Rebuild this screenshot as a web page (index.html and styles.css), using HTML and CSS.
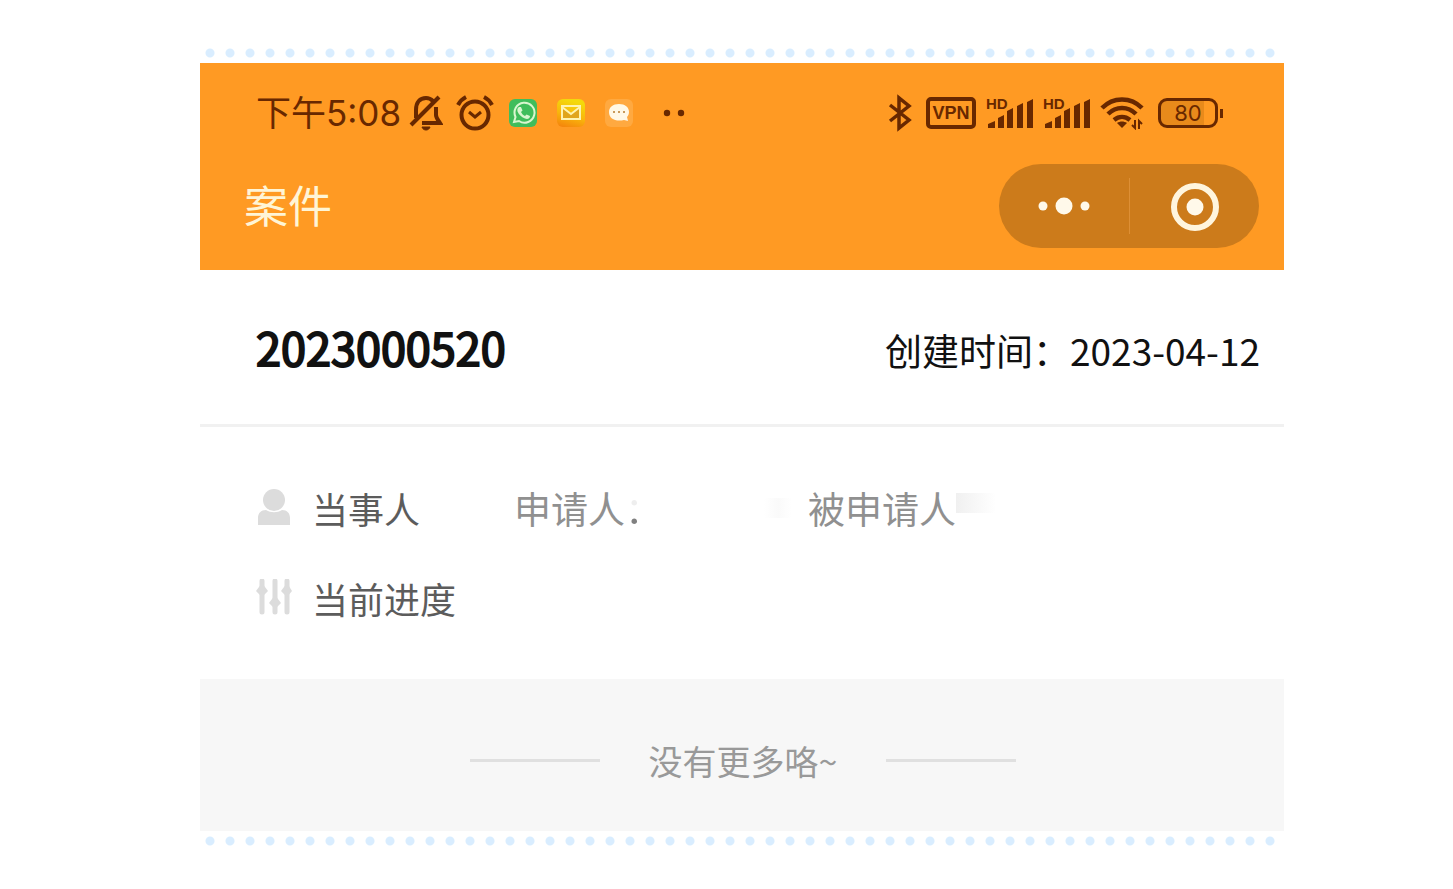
FILE: index.html
```
<!DOCTYPE html>
<html lang="zh-CN">
<head>
  <meta charset="UTF-8">
  <meta name="viewport" content="width=device-width, initial-scale=1.0">
  <title>案件</title>
  <link rel="stylesheet" href="styles.css">
</head>
<body>
  <main class="page">
    <div class="dots"></div>

    <header class="topbar">
      <div class="status">
        <div class="status-left">
          <span class="time">下午5:08</span>
          <svg width="34" height="38" viewBox="0 0 34 38" fill="none" stroke="#682800" stroke-width="4">
            <path d="M7 24V16C7 8 11 4 17 4c3 0 5 1 7 3M27 13v8c0 3 2 5 4 8H13"/>
            <path d="M2 31L30 3"/>
            <path d="M13 33h8c-1 4-7 4-8 0z" fill="#682800" stroke-width="1"/>
          </svg>
          <svg width="38" height="38" viewBox="0 0 38 38" fill="none" stroke="#682800" stroke-width="4">
            <circle cx="19" cy="21" r="13.5"/>
            <path d="M13 18l6 5 6-5" stroke-width="3"/>
            <path d="M2 11c2-4 4-6 8-8M28 3c4 2 6 4 8 8"/>
          </svg>
          <svg class="app" width="28" height="28" viewBox="0 0 28 28">
            <rect width="28" height="28" rx="6" fill="#40bd5b"/>
            <path d="M5 23l1.500-5A10 10 0 1 1 10 22z" fill="none" stroke="#d9f6cf" stroke-width="2"/>
            <path d="M10 8l2 0 1.500 3.500-1.500 1.500c1 2 2 3 4 4l1.500-1.500 3.500 1.500c0 3-3 3.500-5 2.500-4-1.500-6-4-7.500-7-.5-2 0-4 1.500-4.500z" fill="#d9f6cf"/>
          </svg>
          <svg class="app" width="28" height="28" viewBox="0 0 28 28">
            <defs>
              <linearGradient id="mail" x1="0" y1="1" x2="0.300" y2="0">
                <stop offset="0" stop-color="#f47f0c"/>
                <stop offset=".5" stop-color="#f9b50c"/>
                <stop offset="1" stop-color="#f4d90b"/>
              </linearGradient>
            </defs>
            <rect width="28" height="28" rx="6" fill="url(#mail)"/>
            <path d="M5 7h18v13H5zM5 8l9 7 9-7" fill="#e0a51c" stroke="#fff3b0" stroke-width="2"/>
          </svg>
          <svg class="app" width="28" height="28" viewBox="0 0 28 28">
            <rect width="28" height="28" rx="6" fill="#ffa940"/>
            <path d="M14 5c6 0 10 3 10 8 0 2-1 4-2 5l1 4-4-1c-8 2-15-1-15-8 0-5 4-8 10-8z" fill="#fff8e6"/>
            <path d="M8 13h2M13 13h2M18 13h2" stroke="#c99a5a" stroke-width="2"/>
          </svg>
          <svg class="more" width="22" height="8" viewBox="0 0 22 8" fill="#682800">
            <circle cx="4" cy="4" r="3.200"/>
            <circle cx="18" cy="4" r="3.200"/>
          </svg>
        </div>
        <div class="status-right">
          <svg width="24" height="38" viewBox="0 0 24 38" fill="none" stroke="#682800" stroke-width="3.500">
            <path d="M2 11l19 15-10 8V4l10 8L2 27"/>
          </svg>
          <span class="vpn">VPN</span>
          <span class="signal">
            <span class="hd">HD</span>
            <svg width="47" height="32" viewBox="0 0 47 32" fill="#682800">
              <path d="M2 31v-4l7-3v7zM12 31V21l6-3v13zM21 31V14l6-3v20zM31 31V9l6-3v25zM41 31V5l6-3v29z"/>
            </svg>
          </span>
          <span class="signal">
            <span class="hd">HD</span>
            <svg width="47" height="32" viewBox="0 0 47 32" fill="#682800">
              <path d="M2 31v-4l7-3v7zM12 31V21l6-3v13zM21 31V14l6-3v20zM31 31V9l6-3v25zM41 31V5l6-3v29z"/>
            </svg>
          </span>
          <svg width="44" height="34" viewBox="0 0 44 34" fill="none" stroke="#682800" stroke-width="4.500">
            <path d="M2 12C13 .5 31 .5 42 12M8 18c8-8 20-8 28 0M14 24c5-4 11-4 16 0"/>
            <path d="M17 27c3-2 7-2 10 0l-5 5z" fill="#682800" stroke="none"/>
            <path d="M35 24v8l-3-3M39 33v-8l3 3" stroke-width="2"/>
          </svg>
          <span class="battery">80</span>
        </div>
      </div>

      <div class="nav">
        <h1>案件</h1>
        <div class="capsule">
          <button type="button" aria-label="更多">
            <svg width="52" height="20" viewBox="0 0 52 20" fill="#fff9ea">
              <circle cx="5" cy="10" r="4.500"/>
              <circle cx="26" cy="10" r="8.500"/>
              <circle cx="47" cy="10" r="4.500"/>
            </svg>
          </button>
          <button type="button" aria-label="关闭">
            <svg width="50" height="50" viewBox="0 0 50 50">
              <circle cx="26" cy="26" r="21" fill="none" stroke="#fff5dd" stroke-width="6"/>
              <circle cx="26" cy="26" r="8.500" fill="#fff9ea"/>
            </svg>
          </button>
        </div>
      </div>
    </header>

    <section class="case">
      <div class="case-head">
        <h2>2023000520</h2>
        <span class="created">创建时间：2023-04-12</span>
      </div>
      <div class="case-body">
        <div class="row">
          <svg width="36" height="38" viewBox="0 0 36 38" fill="#dcdcdc">
            <ellipse cx="18" cy="11" rx="11" ry="11"/>
            <path d="M2 36V29c0-5 3-8 8-8 5 3 11 3 16 0 5 0 8 3 8 8v7z"/>
          </svg>
          <span class="label">当事人</span>
          <span class="applicant">申请人<span class="colon">：</span></span>
          <span class="smudge"></span>
          <span class="respondent">被申请人</span>
          <span class="smudge dark"></span>
        </div>
        <div class="row">
          <svg width="36" height="38" viewBox="0 0 36 38" fill="#dcdcdc" stroke="#dcdcdc" stroke-linecap="round">
            <path d="M6 2v31M19 2v31M31 2v31" stroke-width="5"/>
            <path d="M6 4l6 8-6 6-6-6zM19 16l6 8-6 6-6-6zM31 4l5 8-5 6-6-6z" stroke="none"/>
          </svg>
          <span class="label">当前进度</span>
        </div>
      </div>
    </section>

    <footer class="no-more">没有更多咯~</footer>

    <div class="dots"></div>
  </main>
</body>
</html>
```

FILE: styles.css
```
* {
  box-sizing: border-box;
}
body {
  margin: 0;
  background: #fff;
  color: #111;
  font-family: "Noto Sans CJK SC", sans-serif;
}
h1, h2 {
  margin: 0;
  font-weight: normal;
}
svg {
  display: block;
  flex-shrink: 0;
}
.page {
  padding: 43px 169px 38px 200px;
}
.dots {
  height: 20px;
  background: radial-gradient(circle, #d9edff 4px, transparent 5px) 0 0 / 20px 20px;
}

/* top bar */
.topbar {
  background: #ff9a23;
  padding-bottom: 22px;
}
.status {
  display: flex;
  justify-content: space-between;
  align-items: center;
  height: 101px;
  padding: 0 66px 2px 56px;
  color: #682800;
}
.status-left, .status-right {
  display: flex;
  align-items: center;
}
.time {
  font-family: Inter, "Noto Sans CJK SC", sans-serif;
  font-size: 35px;
  line-height: 40px;
  margin-right: 8px;
}
.status-left svg {
  margin-right: 13px;
}
.status-left .app {
  margin-right: 20px;
}
.status-left svg + .app {
  margin-left: 2px;
}
.status-left .app + .app {
  margin-left: 0;
}
.status-left .more {
  margin: 0 0 0 10px;
}
.status-right {
  gap: 10px;
}
.vpn {
  width: 50px;
  height: 32px;
  margin-left: 4px;
  border: 4px solid #682800;
  border-radius: 5px;
  font: bold 18px/24px "Liberation Sans", sans-serif;
  text-align: center;
}
.signal {
  position: relative;
}
.hd {
  position: absolute;
  top: 0;
  left: 0;
  font: bold 15px/14px "Liberation Sans", sans-serif;
}
.battery {
  position: relative;
  width: 60px;
  height: 30px;
  margin-left: 4px;
  border: 3px solid #682800;
  border-radius: 9px;
  background: linear-gradient(to right, #e88a1b 80%, transparent 80%);
  font: 22px/24px Inter, sans-serif;
  text-align: center;
}
.battery::after {
  content: "";
  position: absolute;
  top: 8px;
  right: -8px;
  width: 3px;
  height: 9px;
  background: #682800;
}
.nav {
  display: flex;
  justify-content: space-between;
  align-items: center;
  padding: 0 25px 0 44px;
}
.nav h1 {
  padding-bottom: 4px;
  color: #fff5d6;
  font-size: 44px;
  line-height: 60px;
}
.capsule {
  display: flex;
  width: 260px;
  height: 84px;
  border-radius: 42px;
  background: #cc7b1b;
}
.capsule button {
  flex: 1;
  display: flex;
  justify-content: center;
  align-items: center;
  margin: 14px 0;
  padding: 0;
  border: 0;
  background: none;
  cursor: pointer;
}
.capsule button + button {
  border-left: 1px solid #dd8f35;
}

/* case card */
.case {
  background: #fff;
}
.case-head {
  display: flex;
  justify-content: space-between;
  align-items: baseline;
  height: 157px;
  padding: 47px 24px 0 56px;
  border-bottom: 3px solid #f1f1f1;
}
.case-head h2 {
  font-size: 45px;
  line-height: 60px;
  -webkit-text-stroke: 2px #111;
}
.created {
  font-size: 37px;
  line-height: 60px;
}
.case-body {
  padding: 36px 56px;
}
.row {
  display: flex;
  align-items: center;
  height: 90px;
  font-size: 37px;
}
.label {
  width: 202px;
  margin-left: 20px;
  color: #5c5c5c;
  font-size: 36px;
}
.applicant {
  width: 250px;
  color: #909090;
}
.colon {
  background: linear-gradient(#eee 55%, #808080 55%);
  -webkit-background-clip: text;
  background-clip: text;
  color: transparent;
}
.respondent {
  color: #909090;
}
.smudge {
  width: 28px;
  height: 20px;
  margin-right: 16px;
  background: linear-gradient(to right, transparent, #fafafa, transparent);
}
.smudge.dark {
  width: 40px;
  margin: 0 0 10px;
  background: linear-gradient(to right, #f0f0f0, transparent);
}

/* end of list */
.no-more {
  display: flex;
  justify-content: center;
  align-items: center;
  gap: 49px;
  height: 152px;
  padding: 10px 0 0 2px;
  background: #f7f7f7;
  color: #999;
  font-size: 34px;
}
.no-more::before, .no-more::after {
  content: "";
  width: 130px;
  height: 3px;
  background: #e0e0e0;
}
```
